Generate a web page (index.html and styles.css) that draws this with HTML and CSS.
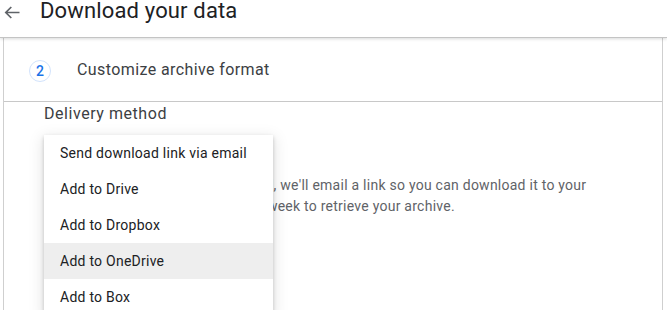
FILE: index.html
```html
<!DOCTYPE html>
<html lang="en">
<head>
  <meta charset="UTF-8">
  <title>Download your data</title>
  <link rel="stylesheet" href="styles.css">
</head>
<body>

  <header class="topbar">
    <svg class="back" width="16" height="13" viewBox="0 0 16 13">
      <path d="M15.5 6.5H1.8M7.3 1L1.8 6.5l5.5 5.5" fill="none" stroke="#5f6368" stroke-width="1.7"/>
    </svg>
    <h1>Download your data</h1>
  </header>

  <div class="card">
    <div class="step-head">
      <span class="step-num">2</span>
      <span class="step-title">Customize archive format</span>
    </div>

    <div class="step-body">
      <h2>Delivery method</h2>

      <div class="field">
        <p class="hint">Once your archive has been created, we'll email a link so you can download it to your<br>device. You will now have just one week to retrieve your archive.</p>

        <ul class="menu">
          <li>Send download link via email</li>
          <li>Add to Drive</li>
          <li>Add to Dropbox</li>
          <li class="active">Add to OneDrive</li>
          <li>Add to Box</li>
        </ul>
      </div>
    </div>
  </div>

</body>
</html>
```

FILE: styles.css
```css
body {
  margin: 0;
  font-family: Roboto, "Liberation Sans", sans-serif;
  background: #fff;
  color: #202124;
  overflow: hidden;
}

.topbar {
  position: relative;
  z-index: 2;
  height: 37px;
  display: flex;
  align-items: flex-start;
  background: #fff;
  border-bottom: 1px solid #c4c4c4;
  box-shadow: 0 1px 3px rgba(60, 64, 67, 0.2);
}

.back {
  margin: 6px 0 0 4px;
}

.topbar h1 {
  margin: 0 0 0 20px;
  font-size: 22px;
  line-height: 22px;
  font-weight: 400;
  letter-spacing: 0.15px;
  color: #202124;
}

.card {
  margin: 0 4px 0 3px;
  height: 280px;
  border-left: 1px solid #cfcfcf;
  border-right: 1px solid #cfcfcf;
}

.step-head {
  height: 63px;
  display: flex;
  align-items: center;
  border-bottom: 1px solid #c8c8c8;
}

.step-num {
  width: 20px;
  height: 20px;
  margin: 2px 0 0 25px;
  border: 1px solid #d2e3fc;
  border-radius: 50%;
  display: flex;
  align-items: center;
  justify-content: center;
  font-size: 14px;
  font-weight: 500;
  color: #1a73e8;
}

.step-title {
  margin-left: 26px;
  font-size: 16px;
  letter-spacing: 0.4px;
  color: #3c4043;
}

.step-body {
  padding-left: 40px;
}

.step-body h2 {
  margin: 2px 0 0;
  font-size: 16px;
  line-height: 20px;
  font-weight: 400;
  letter-spacing: 0.55px;
  color: #3c4043;
}

.field {
  position: relative;
  padding-top: 51px;
}

.hint {
  margin: 0;
  font-size: 14px;
  line-height: 21px;
  letter-spacing: 0.25px;
  color: #5f6368;
}

.menu {
  position: absolute;
  left: 0;
  top: 11px;
  width: 229px;
  margin: 0;
  padding: 0;
  list-style: none;
  background: #fff;
  box-shadow: 0 2px 4px rgba(0, 0, 0, 0.2), 0 4px 14px 2px rgba(0, 0, 0, 0.1);
}

.menu li {
  height: 36px;
  line-height: 36px;
  padding-left: 16px;
  font-size: 14px;
  letter-spacing: 0.25px;
  color: #202124;
}

.menu li.active {
  background: #eeeeee;
}
```
